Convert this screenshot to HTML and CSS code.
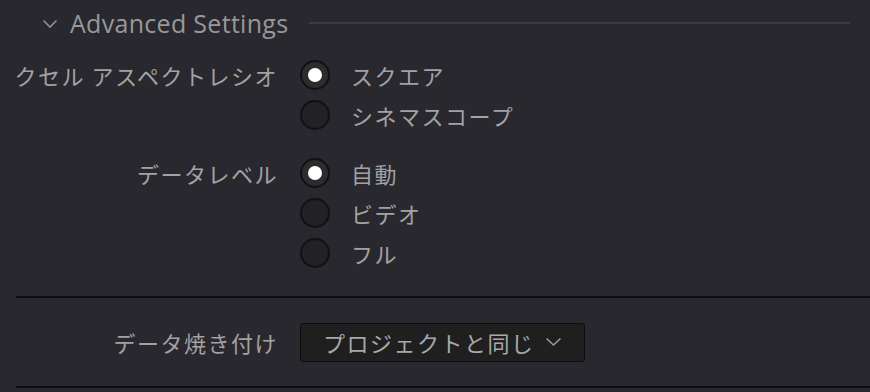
FILE: index.html
```html
<!DOCTYPE html>
<html lang="ja">
<head>
  <meta charset="UTF-8" />
  <meta name="viewport" content="width=device-width, initial-scale=1.0" />
  <title>Advanced Settings</title>
  <link rel="stylesheet" href="styles.css">
</head>
<body>

  <div class="panel">
    <div class="section-header">
      <svg class="chevron" width="16" height="10" viewBox="0 0 16 10">
        <path d="M1.5 1.5 L8 8 L14.5 1.5" fill="none" stroke="#8e8e92" stroke-width="1.6" />
      </svg>
      <span class="section-title">Advanced Settings</span>
      <span class="section-line"></span>
    </div>

    <div class="field">
      <div class="field-label">クセル アスペクトレシオ</div>
      <div class="options">
        <label class="option"><span class="radio checked"></span>スクエア</label>
        <label class="option"><span class="radio"></span>シネマスコープ</label>
      </div>
    </div>

    <div class="field group-2">
      <div class="field-label">データレベル</div>
      <div class="options">
        <label class="option"><span class="radio checked"></span>自動</label>
        <label class="option"><span class="radio"></span>ビデオ</label>
        <label class="option"><span class="radio"></span>フル</label>
      </div>
    </div>

    <div class="divider"></div>

    <div class="field dropdown-row">
      <div class="field-label">データ焼き付け</div>
      <button class="dropdown">プロジェクトと同じ
        <svg width="17" height="10" viewBox="0 0 17 10">
          <path d="M1.5 1.5 L8.5 8 L15.5 1.5" fill="none" stroke="#9a9a9a" stroke-width="1.6" />
        </svg>
      </button>
    </div>

    <div class="divider"></div>
  </div>

</body>
</html>
```

FILE: styles.css
```css
* {
  box-sizing: border-box;
  margin: 0;
  padding: 0;
}

body {
  background: #29282e;
  font-family: 'Noto Sans CJK JP', 'Noto Sans', sans-serif;
  color: #a2a2a4;
  width: 870px;
  height: 392px;
  overflow: hidden;
}

.panel {
  width: 870px;
}

.section-header {
  display: flex;
  align-items: center;
  height: 46px;
  padding-left: 42px;
  padding-right: 20px;
}

.chevron {
  margin-right: 12px;
  margin-top: 2px;
}

.section-title {
  font-family: 'Open Sans', sans-serif;
  font-size: 25px;
  letter-spacing: 0.3px;
  color: #98989a;
  margin-right: 21px;
}

.section-line {
  flex: 1;
  height: 2px;
  background: #3c3b41;
}

.field {
  display: flex;
  margin-top: 9px;
}

.group-2 {
  margin-top: 18px;
}

.field-label {
  width: 278px;
  height: 40px;
  line-height: 40px;
  text-align: right;
  font-size: 22px;
  letter-spacing: 1.5px;
  margin-right: 22px;
  white-space: nowrap;
}

.options {
  display: flex;
  flex-direction: column;
}

.option {
  display: flex;
  align-items: center;
  height: 40px;
  font-size: 22px;
  letter-spacing: 1.5px;
}

.radio {
  width: 30px;
  height: 30px;
  border-radius: 50%;
  border: 2px solid #111113;
  background: #222224;
  margin-right: 21px;
  position: relative;
}

.radio.checked {
  background: #2c2c2e;
}

.radio.checked::after {
  content: "";
  position: absolute;
  left: 6px;
  top: 6px;
  width: 14px;
  height: 14px;
  border-radius: 50%;
  background: #ffffff;
}

.divider {
  height: 2px;
  margin-left: 16px;
  background: #0c0c0f;
  margin-top: 23px;
}

.dropdown-row {
  margin-top: 24px;
  align-items: center;
  height: 40px;
}

.dropdown {
  display: flex;
  align-items: center;
  gap: 10px;
  width: 285px;
  height: 39px;
  padding-left: 22px;
  background: #1f1f20;
  border: 1.5px solid #0d0d0e;
  border-radius: 3px;
  color: #a8a8aa;
  font-family: 'Noto Sans CJK JP', 'Noto Sans', sans-serif;
  font-size: 22px;
  letter-spacing: 1.5px;
}

.dropdown-row + .divider {
  margin-top: 24px;
}
```
